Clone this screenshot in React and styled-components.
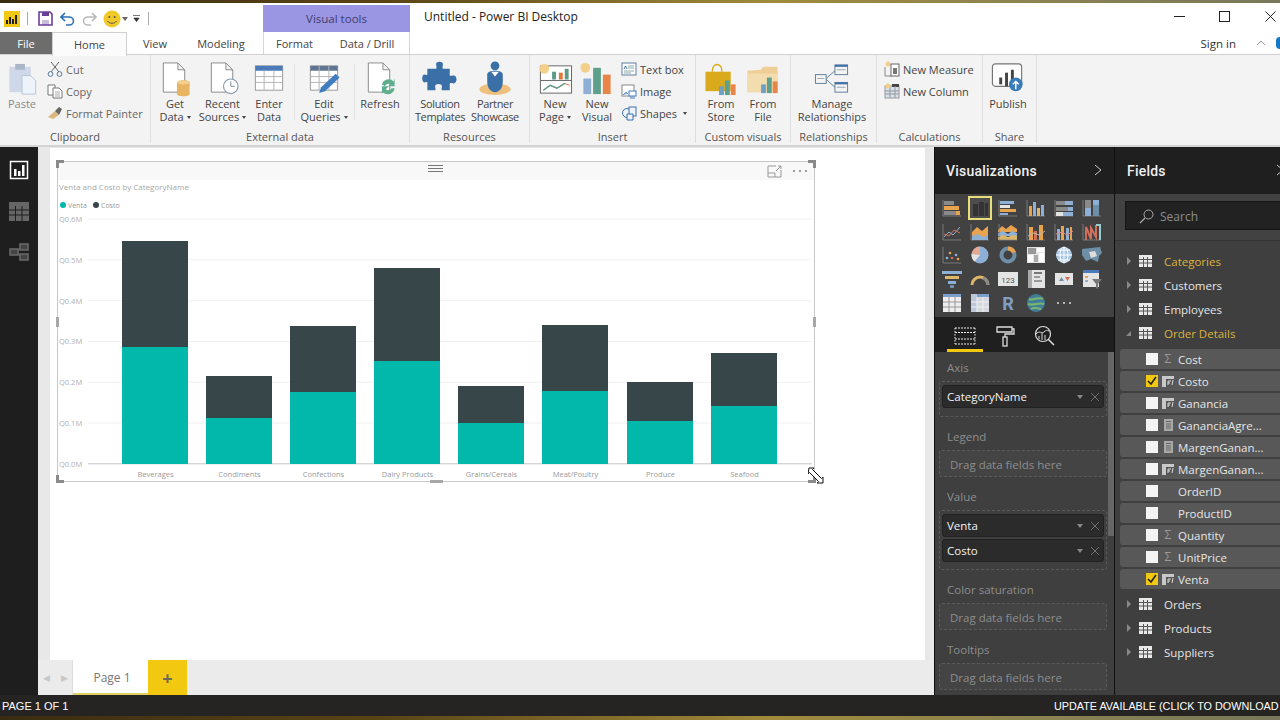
import React from 'react';
import styled, { createGlobalStyle } from 'styled-components';

const Global = createGlobalStyle`
  html, body { margin: 0; padding: 0; background: #1c1c1c; overflow: hidden; }
  * { box-sizing: border-box; }
`;
const UI = '"Open Sans", "Noto Sans", sans-serif';
const DIN = 'Roboto, "Open Sans", sans-serif';

const Shell = styled.div`
  width: 1280px; height: 720px; overflow: hidden; display: flex; flex-direction: column;
  font-family: ${UI}; background: #fff;
`;
const WallStrip = styled.div`
  height: ${p => p.$h}px; flex: none;
  background: linear-gradient(90deg, #3a2c12 0%, #5a4415 30%, #a08a3c 60%, #8c8450 80%, #77775a 100%);
`;
const TitleBar = styled.div`
  height: 29px; flex: none; background: #fff; display: flex; align-items: center; position: relative;
`;
const Qat = styled.div`
  width: 263px; height: 100%; flex: none; display: flex; align-items: center; padding: 2px 0 0 4px;
`;
const QatSep = styled.span`
  width: 1px; height: 13px; background: #aaa; flex: none; margin: ${p => p.$m};
`;
const QatIcon = styled.svg`
  flex: none; display: block; margin-left: ${p => p.$ml || 0}px;
`;
const ContextHead = styled.div`
  width: 147px; height: 27px; margin-top: 2px; flex: none; align-self: flex-start;
  background: #9a96e3; color: #3d3d6e; font-size: 11.5px;
  display: flex; align-items: center; justify-content: center;
`;
const AppTitle = styled.div`
  margin-left: 14px; font-size: 12px; color: #222; padding-bottom: 3px;
`;
const WinButtons = styled.div`
  margin-left: auto; display: flex; align-items: center; height: 100%; padding: 0 4px 3px 0;
`;
const WinBtn = styled.svg`
  display: block; margin-left: ${p => p.$ml}px; flex: none;
`;
const TabRow = styled.div`
  height: 23px; flex: none; display: flex; align-items: stretch; background: #fff; position: relative;
  border-bottom: 1px solid #d0d0d0;
`;
const FileTab = styled.div`
  width: 52px; background: #6d6d6d; color: #fff; font-size: 11px; display: flex; align-items: center; justify-content: center;
`;
const Tab = styled.div`
  width: ${p => p.$w}px; flex: none; font-size: 11px; color: #444; display: flex; align-items: center; justify-content: center;
  ${p => p.$active && `border:1px solid #d0d0d0;border-bottom:0;height:24px;background:#fbfbfb;`}
  ${p => p.$left && `border-left:1px solid #d6d6d6;`}
  ${p => p.$right && `border-right:1px solid #d6d6d6;`}
`;
const SignIn = styled.div`
  margin-left: auto; display: flex; align-items: center; font-size: 11.5px; color: #333;
`;
const SignChevron = styled.svg`
  margin-left: 20px; display: block; flex: none;
`;
const HelpDot = styled.span`
  width: 4px; height: 12px; background: #0f78c8; border-radius: 6px 0 0 6px; margin-left: 10px;
`;
const Ribbon = styled.div`
  height: 92px; flex: none; background: #f3f3f3; border-bottom: 2px solid #d4d4d4; display: flex;
`;
const Group = styled.div`
  width: ${p => p.$w}px; flex: none; display: flex; flex-direction: column; border-right: 1px solid #dedede; margin-bottom: 2px;
`;
const GroupBody = styled.div`
  height: 72px; flex: none; display: flex; padding-left: ${p => p.$pl || 0}px;
`;
const GroupLabel = styled.div`
  text-align: center; font-size: 11px; line-height: 15px; color: #555; margin-top: 2px;
`;
const BigBtn = styled.div`
  width: ${p => p.$w}px; flex: none; display: flex; flex-direction: column; align-items: center;
  padding-top: 6px; color: ${p => p.$dim ? '#8a8a8a' : '#444'};
`;
const BigLabel = styled.span`
  font-size: 11px; line-height: 13px; text-align: center; white-space: nowrap;
  letter-spacing: ${p => p.$tight ? '-0.35px' : '0'};
`;
const BigIcon = styled.svg`
  width: 38px; height: 36px; display: block; flex: none;
`;
const Caret = styled.span`
  display: inline-block; width: 0; height: 0; margin-left: 3px; vertical-align: 2px;
  border-left: 2.5px solid transparent; border-right: 2.5px solid transparent; border-top: 3px solid #444;
`;
const RibbonSep = styled.span`
  width: 1px; height: 56px; background: #e2e2e2; flex: none; margin: 9px ${p => p.$r || 0}px 0 ${p => p.$l || 0}px;
`;
const SmallStack = styled.div`
  display: flex; flex-direction: column; padding-top: 3px; margin-left: ${p => p.$ml || 0}px;
`;
const SmallBtn = styled.div`
  height: 22px; display: flex; align-items: center; gap: 3px; font-size: 11px; color: ${p => p.$dim ? '#666' : '#444'}; white-space: nowrap;
`;
const SmallIcon = styled.svg`
  width: 16px; height: 16px; flex: none; display: block;
`;
const Main = styled.div`
  height: 548px; flex: none; display: flex; background: #1c1c1c;
`;
const NavRail = styled.nav`
  width: 38px; flex: none; background: #1e1e1e; display: flex; flex-direction: column; align-items: center; padding: 13px 1px 0 0; gap: 21px;
`;
const NavIcon = styled.svg`
  width: 20px; height: 20px; display: block; flex: none;
`;
const Center = styled.div`
  width: 896px; flex: none; display: flex; flex-direction: column; background: #e8e8e8;
`;
const CanvasArea = styled.div`
  height: 513px; flex: none; padding: 1px 9px 0 12px; display: flex;
`;
const Page = styled.div`
  flex: 1; background: #fff; position: relative;
`;
const Visual = styled.div`
  position: absolute; left: 7px; top: 13px; width: 758px; height: 321px;
  border: 1px solid #c8c8c8; display: flex; flex-direction: column;
`;
const VisualHead = styled.div`
  height: 18px; flex: none; background: #f8f8f8; display: flex; justify-content: flex-end; align-items: center; gap: 10px; padding-right: 6px;
`;
const Chart = styled.svg`
  display: block; flex: 1; width: 100%;
  text { font-family: ${UI}; }
`;
const Corner = styled.span`
  position: absolute; width: 8px; height: 8px;
  ${p => p.$y}: -2px; ${p => p.$x}: -2px;
  border-${p => p.$y}: 3px solid #8a8a8a; border-${p => p.$x}: 3px solid #8a8a8a;
`;
const SideGrip = styled.span`
  position: absolute; width: 3px; height: 10px; top: 155px; background: #a8a8a8; ${p => p.$x}: -2px;
`;
const BottomGrip = styled.span`
  position: absolute; width: 13px; height: 3px; background: #a8a8a8; left: 372px; bottom: -2px;
`;
const TopGrip = styled.span`
  position: absolute; width: 15px; height: 7px; left: 370px; top: 3px; border-top: 1px solid #777; border-bottom: 1px solid #777;
  &::after { content: ''; display: block; height: 1px; margin-top: 2px; background: #777; }
`;
const Cursor = styled.svg`
  position: absolute; left: 750px; top: 305px; width: 18px; height: 18px;
`;
const PageBar = styled.div`
  height: 35px; flex: none; display: flex; background: #ebebeb;
`;
const PageArrows = styled.div`
  width: 35px; flex: none; display: flex; align-items: center; justify-content: center; gap: 11px; color: #c8c8c8; font-size: 9px; border-right: 1px solid #ddd;
`;
const PageTab = styled.div`
  width: 75px; flex: none; background: #fff; color: #777; font-size: 12px; display: flex; align-items: center; justify-content: center; padding: 1px 0 0 3px; border-bottom: 2px solid #e2cf62;
`;
const AddTab = styled.div`
  width: 39px; flex: none; background: #f2c811; color: #6b6b55; font-size: 18px; font-weight: 700; display: flex; align-items: center; justify-content: center;
`;
const Pane = styled.aside`
  width: ${p => p.$w}px; flex: none; display: flex; flex-direction: column; background: #1e1e1e; overflow: hidden;
  border-left: 1px solid #0f0f0f; position: relative;
`;
const PaneHead = styled.div`
  height: 47px; flex: none; display: flex; align-items: center; padding: 0 0 0 ${p => p.$pl}px;
  color: #f0f0f0; font-family: ${DIN}; font-weight: 500; font-size: 14px; letter-spacing: .2px; background: #1f1f1f; white-space: nowrap;
`;
const PaneChevron = styled.svg`
  position: absolute; top: 17px; left: ${p => p.$l}px; width: 10px; height: 12px;
`;
const VizGrid = styled.div`
  height: 123px; flex: none; background: #424242; display: grid; grid-template-columns: repeat(6, 28px); grid-auto-rows: 23.8px;
  padding: 2px 0 0 3px;
`;
const VizCell = styled.div`
  display: flex; align-items: center; justify-content: center;
  ${p => p.$on && `outline: 2px solid #e8dc7c; outline-offset: -2px; background:#4c4c4c; margin: 0 2px;`}
`;
const VizSvg = styled.svg`
  width: 22px; height: 20px; display: block; flex: none;
`;
const VizTabs = styled.div`
  height: 35px; flex: none; display: flex; background: #1f1f1f; padding-left: 12px; gap: 4px;
`;
const VizTab = styled.div`
  width: 36px; display: flex; align-items: center; justify-content: center; padding-top: 5px; border-bottom: 3px solid ${p => p.$on ? '#f2c811' : 'transparent'};
`;
const WellScroll = styled.div`
  flex: 1; background: #3f3f3f; padding: 8px 0 0 4px; position: relative;
`;
const ScrollThumb = styled.span`
  position: absolute; right: 0; top: 0; width: 6px; height: 184px; background: #666;
`;
const Well = styled.div`
  width: 168px; margin-bottom: 12px;
`;
const WellLabel = styled.div`
  height: 14px; line-height: 16px; margin: 0 0 7px 8px; font-size: 11.5px; color: #8d8d8d;
`;
const WellBox = styled.div`
  height: ${p => p.$h}px; border: 1px dashed #5a5a5a; border-radius: 3px; padding: 3px 2px 0; display: flex; flex-direction: column; gap: 2px;
  ${p => p.$empty && `justify-content:center; padding:2px 0 0 10px; color:#8d8d8d; font-size:11.5px; background:#444;`}
`;
const Chip = styled.div`
  height: 23px; flex: none; background: #2b2b2b; border: 1px solid #222; border-radius: 3px; color: #f2f2f2; font-size: 11.5px;
  display: flex; align-items: center; padding: 0 4px; justify-content: space-between;
`;
const ChipTools = styled.span`
  display: flex; align-items: center; gap: 8px;
`;
const ChipDrop = styled.span`
  width: 0; height: 0; border-left: 3.5px solid transparent; border-right: 3.5px solid transparent; border-top: 4px solid #888;
`;
const SearchWrap = styled.div`
  height: 47px; flex: none; background: #424242; padding: 7px 0 0 10px; border-bottom: 1px solid #333;
`;
const SearchBox = styled.div`
  height: 29px; width: 170px; background: #222; border: 1px solid #151515; display: flex; align-items: center; padding: 2px 0 0 13px; gap: 6px; color: #8d8d8d; font-size: 12px;
`;
const Tree = styled.div`
  flex: 1; background: #3f3f3f; padding-top: 8px; display: flex; flex-direction: column;
`;
const TableRow = styled.div`
  height: 24px; flex: none; display: flex; align-items: center; padding-left: 11px; font-size: 11.5px; color: ${p => p.$used ? '#dbb23e' : '#e6e6e6'};
`;
const Arrow = styled.span`
  width: 0; height: 0; flex: none; margin-right: 8px;
  ${p => p.$open
    ? `border-left: 5px solid transparent; border-bottom: 5px solid #888; margin-right:8px;`
    : `border-top: 4px solid transparent; border-bottom: 4px solid transparent; border-left: 4px solid #888; margin-left:1px;`}
`;
const TableGlyph = styled.svg`
  width: 13px; height: 12px; flex: none; margin-right: 12px; display: block;
`;
const FieldList = styled.div`
  display: flex; flex-direction: column; gap: 2px; margin: 4px 0 3px 5px;
`;
const FieldRow = styled.div`
  height: 20px; flex: none; background: #585858; border-radius: 3px 0 0 3px; display: flex; align-items: center; padding-left: 26px; color: #e6e6e6; font-size: 11.5px;
`;
const Check = styled.span`
  width: 12px; height: 12px; flex: none; background: ${p => p.$on ? '#f2c811' : '#f4f4f4'}; display: flex; align-items: center; justify-content: center;
`;
const FieldKind = styled.span`
  width: 20px; flex: none; display: flex; align-items: center; justify-content: center; color: #9a9a9a; font-size: 12px; line-height: 12px;
`;
const StatusBar = styled.div`
  height: 21px; flex: none; background: #252423; color: #fff; font-family: "Liberation Sans", Arial, sans-serif; font-size: 11px;
  display: flex; justify-content: space-between; align-items: center; padding-left: 2px; white-space: nowrap;
`;
const UpdateText = styled.span`
  width: 226px; flex: none; font-size: 10.8px;
`;

const S = ({ children }) => <BigIcon viewBox="0 0 38 37">{children}</BigIcon>;
const Doc = () => <path d="M7 2h15l7 7v23H7z M22 2v7h7" fill="#fff" stroke="#8a8a8a" strokeWidth="1" />;

const PasteI = () => <S><rect x="6" y="6" width="22" height="26" fill="#cfd8e8" /><rect x="12" y="3" width="10" height="6" fill="#aab6c8" /><path d="M19 15h9l5 5v14H19z" fill="#eef3fa" stroke="#b5c4da" /></S>;
const GetDataI = () => <S><Doc /><path d="M21 22c0-3 13-3 13 0v12c0 3-13 3-13 0z" fill="#e8b562" /><ellipse cx="27.5" cy="22" rx="6.5" ry="2" fill="#f3d193" /></S>;
const RecentI = () => <S><Doc /><circle cx="27" cy="26" r="7.5" fill="#fff" stroke="#8a9aa8" strokeWidth="1.2" /><path d="M27 21v5h4" fill="none" stroke="#77889a" /></S>;
const TableBig = () => <><rect x="5" y="3" width="28" height="25" fill="#fff" stroke="#9a9a9a" /><rect x="5" y="3" width="28" height="5" fill="#4a7ab8" /><path d="M5 14h28M5 20h28M14 8v20M24 8v20" stroke="#b5b5b5" /></>;
const EnterI = () => <S><g transform="translate(0 2)"><TableBig /></g></S>;
const EditI = () => <S><g transform="translate(0 2)"><rect x="5" y="3" width="28" height="25" fill="#fff" stroke="#9a9a9a" /><rect x="5" y="3" width="28" height="5" fill="#5d7590" /><path d="M5 14h28M5 20h28M14 3v25M24 3v25" stroke="#b5b5b5" /></g><path d="M14 33l2-6 15-14 4 4-15 14z" fill="#3f7cc0" /></S>;
const RefreshI = () => <S><Doc /><path d="M21 24a7 7 0 0 1 12-3l1-3v8h-7l3-2a4 4 0 0 0-6 2zM34 28a7 7 0 0 1-12 4l-1 2v-8h7l-3 3a4 4 0 0 0 6-1z" fill="#5fae8e" /></S>;
const PuzzleI = () => <S><path d="M15 3c0-3 7-3 7 0 0 3-1 4 0 5h7v7c1 1 2 0 4 0 4 0 4 8 0 8-2 0-3-1-4 0v7h-8c-1-1 0-2 0-4 0-3-7-3-7 0 0 2 1 3 0 4H6v-8c-1-1-2 0-3 0-3 0-3-8 0-8 1 0 2 1 3 0V8h9c1-1 0-3 0-5z" fill="#3a6fa8" /></S>;
const PartnerI = () => <S><ellipse cx="19" cy="29" rx="16" ry="6" fill="#eec07c" /><circle cx="19" cy="5" r="4.5" fill="#3a6fa8" /><path d="M11 14c0-3 4-4 8-4s8 1 8 4v7c0 7-4 11-8 11s-8-4-8-11z" fill="#3a6fa8" /><path d="M15 11l4 5 4-5z" fill="#fff" /></S>;
const NewPageI = () => <S><rect x="4" y="5" width="32" height="28" fill="#fff" stroke="#666" /><path d="M4 20h32" stroke="#666" /><rect x="16" y="11" width="4" height="8" fill="#5d9a8a" /><rect x="23" y="12" width="4" height="7" fill="#e07a3c" /><rect x="29" y="8" width="4" height="11" fill="#5d9a8a" /><path d="M7 30l7-5 7 3 8-5 5 2" fill="none" stroke="#e07a3c" /><path d="M7 30l7-5 7 3 8-5" fill="none" stroke="#5d9a8a" strokeWidth="1.4" /><circle cx="8" cy="8" r="5" fill="#f3d08a" /></S>;
const NewVisualI = () => <S><circle cx="7" cy="7" r="5" fill="#f3d08a" /><rect x="5" y="18" width="8" height="16" fill="#8fb0d6" /><rect x="15" y="7" width="8" height="27" fill="#5fa08c" /><rect x="25" y="14" width="8" height="20" fill="#e8864a" /></S>;
const StoreI = () => <S><path d="M3 11h26v20H3z" fill="#d9ab1c" /><path d="M10 11c0-10 10-10 10 0" fill="none" stroke="#d9ab1c" strokeWidth="1.5" /><rect x="17" y="26" width="5" height="9" fill="#6fa0c8" /><rect x="23" y="20" width="5" height="15" fill="#5fa08c" /><rect x="29" y="24" width="5" height="11" fill="#e8864a" /></S>;
const FileI = () => <S><path d="M3 10l14-1 2-3h15v26H3z" fill="#f0cf96" /><path d="M3 13h31v19H3z" fill="#f3dcae" /><rect x="17" y="24" width="5" height="9" fill="#6fa0c8" /><rect x="23" y="17" width="5" height="16" fill="#5fa08c" /><rect x="29" y="21" width="5" height="12" fill="#e8864a" /></S>;
const ManageI = () => <S><g fill="#f4f4f4" stroke="#5f7f9f"><rect x="2" y="14" width="11" height="9" /><rect x="22" y="4" width="13" height="10" /><rect x="22" y="22" width="13" height="10" /></g><path d="M13 18l9-8M13 19l9 8" stroke="#5f7f9f" /><path d="M4 18h7M24 9h9M24 27h9" stroke="#9ab" /><rect x="22" y="4" width="13" height="2" fill="#3f6fa8" /><rect x="22" y="22" width="13" height="2" fill="#3f6fa8" /></S>;
const PublishI = () => <S><rect x="3" y="3" width="30" height="23" rx="3" fill="#fff" stroke="#777" strokeWidth="1.2" /><rect x="10" y="17" width="3" height="7" fill="#444" /><rect x="16" y="12" width="3" height="14" fill="#444" /><rect x="22" y="9" width="3" height="17" fill="#444" /><circle cx="27" cy="24" r="7" fill="#3a7cb8" /><path d="M27 29v-8M24 24l3-3 3 3" stroke="#fff" strokeWidth="1.5" fill="none" /></S>;

const Sm = ({ children }) => <SmallIcon viewBox="0 0 16 16">{children}</SmallIcon>;
const CutI = () => <Sm><path d="M4 1l8 10M12 1L4 11" stroke="#666" fill="none" /><circle cx="3.5" cy="13" r="2.4" fill="none" stroke="#5a7a9a" /><circle cx="12.5" cy="13" r="2.4" fill="none" stroke="#5a7a9a" /></Sm>;
const CopyI = () => <Sm><path d="M1 2h7v10H1z" fill="#fff" stroke="#777" /><path d="M6 5h6l3 3v7H6z" fill="#fff" stroke="#777" /><path d="M8 9h5M8 11h5M8 13h5" stroke="#aaa" /></Sm>;
const BrushI = () => <Sm><path d="M1 12l7-6 4 4-6 4z" fill="#dcb87c" /><path d="M8 6l4-4 3 2-3 6z" fill="#666" /></Sm>;
const TextBoxI = () => <Sm><rect x="1" y="2" width="14" height="12" fill="#fff" stroke="#5f7f9f" /><path d="M7 5h6M7 7h6M3 10h10M3 12h7" stroke="#8aa" /><path d="M3 8l1.5-3L6 8" fill="none" stroke="#3f6fa8" /></Sm>;
const ImageI = () => <Sm><rect x="1" y="2" width="12" height="11" fill="#fff" stroke="#888" /><path d="M2 12l3-3 2 2" fill="#8fb0d6" stroke="#6a9ac8" /><rect x="8" y="8" width="7" height="5" fill="#fff" stroke="#3f7cc0" /><path d="M9 15h5" stroke="#3f7cc0" /></Sm>;
const ShapesI = () => <Sm><circle cx="6" cy="8" r="4.5" fill="#eef3fa" stroke="#3f6fa8" /><rect x="8" y="2" width="7" height="9" fill="#eef3fa" stroke="#3f6fa8" /><path d="M6 9h6v6H6z" fill="#eef3fa" stroke="#3f6fa8" /></Sm>;
const MeasureI = () => <Sm><path d="M1 6v9h7" fill="none" stroke="#888" /><circle cx="4" cy="3" r="2.5" fill="#f3d08a" /><rect x="7" y="3" width="8" height="12" fill="#fff" stroke="#666" /><path d="M9 7h4v6H9z" fill="#777" /></Sm>;
const ColumnI = () => <Sm><rect x="1" y="3" width="14" height="12" fill="#d7e0ef" stroke="#999" /><rect x="8" y="1" width="7" height="3" fill="#444" /><path d="M1 8h14M1 11h14M6 3v12M11 3v12" stroke="#999" /><circle cx="4" cy="3" r="2.5" fill="#f3d08a" /></Sm>;

const c = { o: '#e8a34f', b: '#8fb0d6', g: '#8a8a8a', d: '#555', t: '#6e8fa8', w: '#e4e4e4', y: '#dcb66a', r: '#d0705a' };
const Axis = () => <path d="M2 2v16h18" stroke="#888" fill="none" strokeWidth=".8" />;
const R = (x, y, w, h, f) => <rect key={`${x}-${y}-${f}`} x={x} y={y} width={w} height={h} fill={f} />;
const viz = [
  <><Axis />{R(3, 3, 10, 4, c.g)}{R(3, 8, 7, 4, c.o)}{R(10, 8, 8, 4, c.o)}{R(3, 13, 12, 4, c.g)}{R(15, 13, 4, 4, c.o)}</>,
  <>{R(4, 6, 5, 12, '#333')}{R(10, 4, 5, 14, '#333')}{R(16, 5, 3, 13, '#333')}</>,
  <><Axis />{R(3, 3, 14, 3, c.b)}{R(3, 7, 10, 3, c.w)}{R(3, 11, 16, 3, c.o)}{R(3, 15, 8, 2, c.b)}</>,
  <><Axis />{R(4, 8, 3, 10, c.o)}{R(8, 4, 3, 14, c.b)}{R(12, 10, 3, 8, c.y)}{R(16, 7, 3, 11, c.b)}</>,
  <><Axis />{R(3, 3, 9, 4, c.g)}{R(12, 3, 8, 4, c.b)}{R(3, 9, 12, 4, c.g)}{R(15, 9, 5, 4, c.b)}{R(3, 14, 7, 4, c.w)}{R(10, 14, 10, 4, c.b)}</>,
  <><Axis />{R(4, 2, 6, 8, c.g)}{R(4, 10, 6, 8, c.b)}{R(12, 2, 6, 5, c.b)}{R(12, 7, 6, 11, c.t)}</>,
  <><Axis /><path d="M3 15l5-5 4 3 7-8" stroke={c.b} fill="none" /><path d="M3 12l5 2 5-6 6 3" stroke={c.r} fill="none" /></>,
  <><Axis /><path d="M3 18V10l5-5 5 4 6-5v14z" fill={c.o} /><path d="M3 18v-4l6-2 5 3 5-2v5z" fill={c.b} /></>,
  <><path d="M1 8l4-4 4 3 5-4 6 4v3H1z" fill={c.o} /><path d="M1 11l5-2 5 3 4-3 5 2v3H1z" fill={c.b} /><path d="M1 15l5-2 5 2 5-2 4 1v4H1z" fill={c.y} /><Axis /></>,
  <><Axis />{R(4, 5, 4, 13, c.o)}{R(9, 9, 3, 9, c.r)}{R(14, 3, 4, 15, c.o)}<path d="M3 14l6-3 5 2 6-4" stroke="#bbb" fill="none" /></>,
  <><Axis />{R(4, 7, 3, 11, c.b)}{R(8, 4, 3, 14, c.o)}{R(13, 6, 3, 12, c.b)}{R(17, 5, 2, 13, c.o)}<path d="M3 12l6-2 5 3 6-4" stroke="#d88" fill="none" /></>,
  <><Axis /><path d="M5 18V5l5 12V6l5 9V3" stroke={c.r} strokeWidth="2" fill="none" /><path d="M15 3h4v15" stroke="#9cc" strokeWidth="2" fill="none" /></>,
  <><Axis /><circle cx="6" cy="13" r="1.3" fill={c.b} /><circle cx="9" cy="8" r="1.3" fill={c.o} /><circle cx="11" cy="13" r="1.3" fill={c.r} /><circle cx="15" cy="10" r="1.3" fill={c.b} /><circle cx="17" cy="14" r="1.3" fill={c.o} /></>,
  <><circle cx="11" cy="10" r="8.5" fill={c.b} /><path d="M11 10V1.5A8.5 8.5 0 0 0 2.6 9z" fill="#e6a890" /><path d="M11 10L2.6 9a8.5 8.5 0 0 0 3 7.5z" fill={c.w} /></>,
  <><circle cx="11" cy="10" r="6.5" fill="none" stroke={c.t} strokeWidth="4" /><path d="M11 3.5a6.5 6.5 0 0 1 6 4" fill="none" stroke={c.o} strokeWidth="4" /></>,
  <><rect x="2" y="2" width="18" height="16" fill={c.w} />{R(3, 3, 8, 6, '#999')}{R(12, 3, 7, 4, '#fff')}{R(3, 10, 5, 7, '#fff')}{R(9, 10, 4, 7, '#aaa')}{R(14, 8, 5, 9, '#fff')}</>,
  <><circle cx="11" cy="10" r="8" fill="#a9c6e4" /><path d="M3 10h16M11 2v16M5 5h12M5 15h12" stroke="#fff" /><ellipse cx="11" cy="10" rx="4" ry="8" fill="none" stroke="#fff" /></>,
  <><path d="M1 4l18-2 2 6-3 3-1 6-7-3-5 2-4-6z" fill={c.t} /><path d="M8 7l6-1 2 5-6 2z" fill="#dcdcdc" /></>,
  <><path d="M1 2h20v3H1z" fill={c.b} /><path d="M4 7h14v3H4z" fill={c.y} /><path d="M7 12h8v3H7z" fill={c.b} /><path d="M9 16h4v3H9z" fill={c.t} /></>,
  <><path d="M3 16a8 8 0 0 1 16 0" fill="none" stroke={c.y} strokeWidth="3" /><path d="M14 9a8 8 0 0 1 5 7" fill="none" stroke={c.g} strokeWidth="3" /></>,
  <><rect x="1" y="3" width="20" height="14" fill={c.w} /><text x="11" y="13.500" fontSize="8" textAnchor="middle" fill="#555" fontFamily="Roboto">123</text></>,
  <><rect x="3" y="1" width="17" height="18" fill={c.w} />{R(3, 1, 4, 18, '#aaa')}{R(9, 3, 8, 2, '#777')}{R(9, 7, 6, 2, '#999')}{R(9, 11, 8, 2, '#999')}</>,
  <><rect x="2" y="4" width="18" height="12" fill={c.w} /><path d="M6 12l2.5-4 2.5 4z" fill={c.t} /><path d="M12 8h5l-2.5 4z" fill={c.r} /></>,
  <><rect x="2" y="1" width="16" height="17" fill={c.w} />{R(2, 1, 16, 3, '#4a7ab8')}{R(4, 7, 3, 2, c.o)}{R(4, 11, 3, 2, c.b)}<path d="M11 10h10l-4 5v5l-2-1v-4z" fill="#777" /></>,
  <><rect x="2" y="1" width="18" height="18" fill="#eee" />{R(2, 1, 18, 3, '#7ba0cc')}<path d="M2 9h18M2 14h18M8 4v15M14 4v15" stroke="#999" /></>,
  <><rect x="2" y="1" width="18" height="18" fill="#d5d8df" />{R(2, 1, 18, 3, '#7ba0cc')}{R(2, 1, 6, 18, '#bcc8da')}<path d="M2 9h18M2 14h18M8 4v15M14 4v15" stroke="#f0f0f0" /></>,
  <text x="11" y="16.500" fontSize="18" fontWeight="700" textAnchor="middle" fill="#7f9fc4" fontFamily="Roboto">R</text>,
  <><circle cx="11" cy="10" r="9" fill="#3f7d9a" /><path d="M4 6c4 2 9-3 14 0M3 11c6 2 10-2 16 0M6 16c3-2 7-1 10 0" stroke="#7fb56a" strokeWidth="2" fill="none" /></>,
  <><circle cx="5" cy="10" r="1" fill="#ddd" /><circle cx="11" cy="10" r="1" fill="#ddd" /><circle cx="17" cy="10" r="1" fill="#ddd" /></>,
];

const bars = [
  ['Beverages', 122, 241, 347], ['Condiments', 206, 376, 418], ['Confections', 290, 326, 392], ['Dairy Products', 374, 268, 361],
  ['Grains/Cereals', 458, 386, 423], ['Meat/Poultry', 542, 325, 391], ['Produce', 627, 382, 421], ['Seafood', 711, 353, 406],
];
const ticks = ['Q0.6M', 'Q0.5M', 'Q0.4M', 'Q0.3M', 'Q0.2M', 'Q0.1M', 'Q0.0M'];

const ChartSvg = () => (
  <Chart viewBox="58 180 756 301" preserveAspectRatio="none">
    <text x="59" y="190" fontSize="8" fill="#a8a8a8">Venta and Costo by CategoryName</text>
    <circle cx="63" cy="205" r="3" fill="#01b8aa" /><text x="68" y="207.500" fontSize="7" fill="#999">Venta</text>
    <circle cx="96" cy="205" r="3" fill="#374649" /><text x="101" y="207.500" fontSize="7" fill="#999">Costo</text>
    {ticks.map((t, i) => {
      const y = 219 + i * 40.8;
      return (
        <g key={t}>
          <text x="59" y={y + 3} fontSize="7.5" fill="#b0b0b0">{t}</text>
          <path d={`M88 ${y}H812`} stroke={i === 6 ? '#c4c4c4' : '#f0f0f0'} />
        </g>
      );
    })}
    {bars.map(([n, x, a, b]) => (
      <g key={n}>
        <rect x={x} y={a} width="66" height={b - a} fill="#374649" />
        <rect x={x} y={b} width="66" height={464 - b} fill="#01b8aa" />
        <text x={x + 33.5} y="477" fontSize="7.500" textAnchor="middle" fill="#9a9a9a">{n}</text>
      </g>
    ))}
  </Chart>
);

const TableIcon = () => (
  <TableGlyph viewBox="0 0 13 12">
    <rect width="13" height="12" fill="#e8e8e8" />
    <path d="M0 4.5h13M0 8h13M4.5 2v10M8.5 2v10" stroke="#555" />
  </TableGlyph>
);
const FxIcon = () => (
  <svg width="12" height="11" viewBox="0 0 12 11" style={{ display: 'block' }}>
    <rect width="12" height="11" fill="#c8c8c8" />
    <rect x="4" y="3" width="8" height="8" fill="#555" />
    <path d="M6 9V5h3M6 7h2M11 4l-1 5" stroke="#ddd" fill="none" />
  </svg>
);
const CalcIcon = () => (
  <svg width="9" height="12" viewBox="0 0 9 12" style={{ display: 'block' }}>
    <rect width="9" height="12" fill="#a8a8a8" />
    <path d="M2 2.5h5M2 5h5M2 7h5M2 9h5" stroke="#666" />
  </svg>
);
const Tick = () => (
  <svg width="10" height="10" viewBox="0 0 10 10"><path d="M1 5l3 3 5-7" stroke="#222" strokeWidth="1.6" fill="none" /></svg>
);
const Ex = ({ color = '#777', size = 8 }) => (
  <svg width={size} height={size} viewBox="0 0 8 8"><path d="M0 0l8 8M8 0L0 8" stroke={color} strokeWidth=".9" /></svg>
);

const fields = [
  ['Cost', 's', false], ['Costo', 'f', true], ['Ganancia', 'f', false], ['GananciaAgre...', 'c', false], ['MargenGanan...', 'c', false],
  ['MargenGanan...', 'f', false], ['OrderID', '', false], ['ProductID', '', false], ['Quantity', 's', false], ['UnitPrice', 's', false], ['Venta', 'f', true],
];

const ChipRow = ({ name }) => (
  <Chip>{name}<ChipTools><ChipDrop /><Ex /></ChipTools></Chip>
);

export default function App() {
  return (
    <Shell>
      <Global />
      <WallStrip $h={3} />
      <TitleBar>
        <Qat>
          <QatIcon width="16" height="16" viewBox="0 0 16 16"><rect width="16" height="16" fill="#f2c811" /><path d="M3 13V9M6 13V6M9 13V8M12 13V4" stroke="#222" strokeWidth="2" /></QatIcon>
          <QatSep $m="0 0 0 7px" />
          <QatIcon $ml={10} width="15" height="15" viewBox="0 0 15 15"><path d="M1 1h11l2 2v11H1z" fill="#fff" stroke="#6b3f98" strokeWidth="1.6" /><rect x="4" y="1" width="7" height="4" fill="#6b3f98" /><rect x="4" y="9" width="7" height="5" fill="#6b3f98" opacity=".35" /></QatIcon>
          <QatIcon $ml={7} width="15" height="14" viewBox="0 0 15 14"><path d="M5 1L1 5l4 4M1 5h8a4.5 4 0 0 1 0 8H6" fill="none" stroke="#2a6fb0" strokeWidth="1.6" /></QatIcon>
          <QatIcon $ml={7} width="15" height="14" viewBox="0 0 15 14"><path d="M10 1l4 4-4 4M14 5H6a4.5 4 0 0 0 0 8h3" fill="none" stroke="#b9b9b9" strokeWidth="1.6" /></QatIcon>
          <QatIcon $ml={6} width="18" height="18" viewBox="0 0 18 18"><circle cx="9" cy="9" r="8.5" fill="#f0c929" /><circle cx="6.3" cy="7" r="1" fill="#555" /><circle cx="11.7" cy="7" r="1" fill="#555" /><path d="M4.5 11c2 3 7 3 9 0" stroke="#555" fill="none" /></QatIcon>
          <QatIcon $ml={1} width="6" height="4" viewBox="0 0 6 4"><path d="M0 0h6L3 4z" fill="#666" /></QatIcon>
          <QatIcon $ml={5} width="7" height="7" viewBox="0 0 8 7"><path d="M0 0h8M1 3h6l-3 4z" stroke="#333" fill="#333" strokeWidth=".8" /></QatIcon>
          <QatSep $m="0 0 0 8px" />
        </Qat>
        <ContextHead>Visual tools</ContextHead>
        <AppTitle>Untitled - Power BI Desktop</AppTitle>
        <WinButtons>
          <WinBtn $ml={0} width="11" height="11" viewBox="0 0 11 11"><path d="M0 5.5h11" stroke="#222" /></WinBtn>
          <WinBtn $ml={34} width="11" height="11" viewBox="0 0 11 11"><rect x=".5" y=".5" width="10" height="10" fill="none" stroke="#222" /></WinBtn>
          <WinBtn $ml={35} width="11" height="11" viewBox="0 0 11 11"><path d="M.5.5l10 10M10.5.5l-10 10" stroke="#222" /></WinBtn>
        </WinButtons>
      </TitleBar>
      <TabRow>
        <FileTab>File</FileTab>
        <Tab $w={75} $active>Home</Tab>
        <Tab $w={56}>View</Tab>
        <Tab $w={76}>Modeling</Tab>
        <Tab $w={4} />
        <Tab $w={62} $left>Format</Tab>
        <Tab $w={85} $right>Data / Drill</Tab>
        <SignIn>Sign in
          <SignChevron width="10" height="6" viewBox="0 0 10 6"><path d="M1 5l4-4 4 4" stroke="#999" fill="none" /></SignChevron>
          <HelpDot />
        </SignIn>
      </TabRow>
      <Ribbon>
        <Group $w={151}>
          <GroupBody>
            <BigBtn $w={44} $dim><PasteI /><BigLabel>Paste</BigLabel></BigBtn>
            <SmallStack $ml={3}>
              <SmallBtn $dim><CutI />Cut</SmallBtn>
              <SmallBtn $dim><CopyI />Copy</SmallBtn>
              <SmallBtn $dim><BrushI />Format Painter</SmallBtn>
            </SmallStack>
          </GroupBody>
          <GroupLabel>Clipboard</GroupLabel>
        </Group>
        <Group $w={259}>
          <GroupBody $pl={1}>
            <BigBtn $w={46}><GetDataI /><BigLabel>Get<br />Data<Caret /></BigLabel></BigBtn>
            <BigBtn $w={49}><RecentI /><BigLabel>Recent<br />Sources<Caret /></BigLabel></BigBtn>
            <BigBtn $w={44}><EnterI /><BigLabel>Enter<br />Data</BigLabel></BigBtn>
            <RibbonSep $l={3} $r={4} />
            <BigBtn $w={50}><EditI /><BigLabel>Edit<br />Queries<Caret /></BigLabel></BigBtn>
            <RibbonSep $l={5} $r={0} />
            <BigBtn $w={50}><RefreshI /><BigLabel>Refresh</BigLabel></BigBtn>
          </GroupBody>
          <GroupLabel>External data</GroupLabel>
        </Group>
        <Group $w={120}>
          <GroupBody $pl={1}>
            <BigBtn $w={58}><PuzzleI /><BigLabel $tight>Solution<br />Templates</BigLabel></BigBtn>
            <BigBtn $w={52}><PartnerI /><BigLabel $tight>Partner<br />Showcase</BigLabel></BigBtn>
          </GroupBody>
          <GroupLabel>Resources</GroupLabel>
        </Group>
        <Group $w={166}>
          <GroupBody $pl={3}>
            <BigBtn $w={44}><NewPageI /><BigLabel>New<br />Page<Caret /></BigLabel></BigBtn>
            <BigBtn $w={40}><NewVisualI /><BigLabel>New<br />Visual</BigLabel></BigBtn>
            <SmallStack $ml={4}>
              <SmallBtn><TextBoxI />Text box</SmallBtn>
              <SmallBtn><ImageI />Image</SmallBtn>
              <SmallBtn><ShapesI />Shapes<Caret /></SmallBtn>
            </SmallStack>
          </GroupBody>
          <GroupLabel>Insert</GroupLabel>
        </Group>
        <Group $w={95}>
          <GroupBody $pl={3}>
            <BigBtn $w={44}><StoreI /><BigLabel>From<br />Store</BigLabel></BigBtn>
            <BigBtn $w={40}><FileI /><BigLabel>From<br />File</BigLabel></BigBtn>
          </GroupBody>
          <GroupLabel>Custom visuals</GroupLabel>
        </Group>
        <Group $w={86}>
          <GroupBody $pl={1}>
            <BigBtn $w={80}><ManageI /><BigLabel>Manage<br />Relationships</BigLabel></BigBtn>
          </GroupBody>
          <GroupLabel>Relationships</GroupLabel>
        </Group>
        <Group $w={106}>
          <GroupBody $pl={7}>
            <SmallStack>
              <SmallBtn><MeasureI />New Measure</SmallBtn>
              <SmallBtn><ColumnI />New Column</SmallBtn>
            </SmallStack>
          </GroupBody>
          <GroupLabel>Calculations</GroupLabel>
        </Group>
        <Group $w={54}>
          <GroupBody $pl={1}>
            <BigBtn $w={48}><PublishI /><BigLabel>Publish</BigLabel></BigBtn>
          </GroupBody>
          <GroupLabel>Share</GroupLabel>
        </Group>
      </Ribbon>
      <Main>
        <NavRail>
          <NavIcon viewBox="0 0 20 20"><rect x="1.5" y="1.5" width="17" height="17" fill="#1e1e1e" stroke="#fff" strokeWidth="1.5" /><path d="M5 16V9h2.5v7zM9 16v-5h2.5v5zM13 16V5h2.5v11z" fill="#fff" /></NavIcon>
          <NavIcon viewBox="0 0 20 20"><rect x="0" y="1" width="20" height="19" fill="#666" /><path d="M0 9h20M0 14h20M6.5 5v15M13 5v15" stroke="#1e1e1e" /></NavIcon>
          <NavIcon viewBox="0 0 20 20"><g fill="#444" stroke="#6a6a6a" strokeWidth="1.5"><rect x="1" y="7" width="8" height="6" /><rect x="11" y="2" width="8" height="6" /><rect x="11" y="12" width="8" height="6" /></g><path d="M9 9l2-3M9 11l2 3" stroke="#6a6a6a" /></NavIcon>
        </NavRail>
        <Center>
          <CanvasArea>
            <Page>
              <Visual>
                <VisualHead>
                  <svg width="15" height="13" viewBox="0 0 15 13"><path d="M9 1H1v11h13V5M1 8h7v4M9 6l5-5M11 1h3v3" fill="none" stroke="#999" /></svg>
                  <svg width="16" height="4" viewBox="0 0 16 4"><circle cx="2" cy="2" r="1.1" fill="#888" /><circle cx="8" cy="2" r="1.1" fill="#888" /><circle cx="14" cy="2" r="1.1" fill="#888" /></svg>
                </VisualHead>
                <ChartSvg />
                <Corner $x="left" $y="top" /><Corner $x="right" $y="top" /><Corner $x="left" $y="bottom" /><Corner $x="right" $y="bottom" />
                <SideGrip $x="left" /><SideGrip $x="right" /><BottomGrip /><TopGrip />
                <Cursor viewBox="0 0 18 18"><path d="M1 1h5L4.5 2.5l9 9L15 10v6H9l1.5-1.5-9-9L0 7z" fill="#fff" stroke="#111" /></Cursor>
              </Visual>
            </Page>
          </CanvasArea>
          <PageBar>
            <PageArrows><span>◀</span><span>▶</span></PageArrows>
            <PageTab>Page 1</PageTab>
            <AddTab>+</AddTab>
          </PageBar>
        </Center>
        <Pane $w={180}>
          <PaneHead $pl={11}>Visualizations</PaneHead>
          <PaneChevron $l={158} viewBox="0 0 10 12"><path d="M2 1l6 5-6 5" stroke="#ccc" fill="none" /></PaneChevron>
          <VizGrid>
            {viz.map((v, i) => <VizCell key={i} $on={i === 1}><VizSvg viewBox="0 0 22 20">{v}</VizSvg></VizCell>)}
          </VizGrid>
          <VizTabs>
            <VizTab $on><svg width="22" height="18" viewBox="0 0 22 18"><path d="M1 1h20M1 5.500h20M1 12h20M1 17h20" stroke="#eee" strokeDasharray="2 1" fill="none" /><path d="M1 1v16M21 1v16" stroke="#eee" strokeDasharray="1.500 1.500" /></svg></VizTab>
            <VizTab><svg width="20" height="22" viewBox="0 0 20 22"><path d="M2 2h15v5H2zM17 4h2v5H10v3" fill="none" stroke="#ddd" strokeWidth="1.3" /><rect x="8" y="12" width="4" height="9" fill="none" stroke="#ddd" strokeWidth="1.3" /></svg></VizTab>
            <VizTab><svg width="22" height="22" viewBox="0 0 22 22"><circle cx="9" cy="9" r="7.5" fill="none" stroke="#ddd" strokeWidth="1.2" /><path d="M14 14l6 6" stroke="#ddd" strokeWidth="1.5" /><path d="M5 14v-3M8 15V8M11 15v-5M2 9c3-4 6 0 8-2s3-2 5-1" stroke="#ddd" fill="none" /></svg></VizTab>
          </VizTabs>
          <WellScroll>
            <ScrollThumb />
            <Well><WellLabel>Axis</WellLabel><WellBox $h={36}><ChipRow name="CategoryName" /></WellBox></Well>
            <Well><WellLabel>Legend</WellLabel><WellBox $h={27} $empty>Drag data fields here</WellBox></Well>
            <Well><WellLabel>Value</WellLabel><WellBox $h={60}><ChipRow name="Venta" /><ChipRow name="Costo" /></WellBox></Well>
            <Well><WellLabel>Color saturation</WellLabel><WellBox $h={27} $empty>Drag data fields here</WellBox></Well>
            <Well><WellLabel>Tooltips</WellLabel><WellBox $h={27} $empty>Drag data fields here</WellBox></Well>
          </WellScroll>
        </Pane>
        <Pane $w={166}>
          <PaneHead $pl={12}>Fields</PaneHead>
          <PaneChevron $l={160} viewBox="0 0 10 12"><path d="M2 1l6 5-6 5" stroke="#ccc" fill="none" /></PaneChevron>
          <SearchWrap>
            <SearchBox>
              <svg width="15" height="15" viewBox="0 0 15 15"><circle cx="9.500" cy="5.500" r="4.500" fill="none" stroke="#aaa" /><path d="M6 9l-5 5" stroke="#aaa" strokeWidth="1.300" /></svg>
              Search
            </SearchBox>
          </SearchWrap>
          <Tree>
            <TableRow $used><Arrow /><TableIcon />Categories</TableRow>
            <TableRow><Arrow /><TableIcon />Customers</TableRow>
            <TableRow><Arrow /><TableIcon />Employees</TableRow>
            <TableRow $used><Arrow $open /><TableIcon />Order Details</TableRow>
            <FieldList>
              {fields.map(([n, k, on], i) => (
                <FieldRow key={i}>
                  <Check $on={on}>{on && <Tick />}</Check>
                  <FieldKind>{k === 's' ? 'Σ' : k === 'f' ? <FxIcon /> : k === 'c' ? <CalcIcon /> : null}</FieldKind>
                  {n}
                </FieldRow>
              ))}
            </FieldList>
            <TableRow><Arrow /><TableIcon />Orders</TableRow>
            <TableRow><Arrow /><TableIcon />Products</TableRow>
            <TableRow><Arrow /><TableIcon />Suppliers</TableRow>
          </Tree>
        </Pane>
      </Main>
      <StatusBar>
        <span>PAGE 1 OF 1</span>
        <UpdateText>UPDATE AVAILABLE (CLICK TO DOWNLOAD</UpdateText>
      </StatusBar>
      <WallStrip $h={4} />
    </Shell>
  );
}
